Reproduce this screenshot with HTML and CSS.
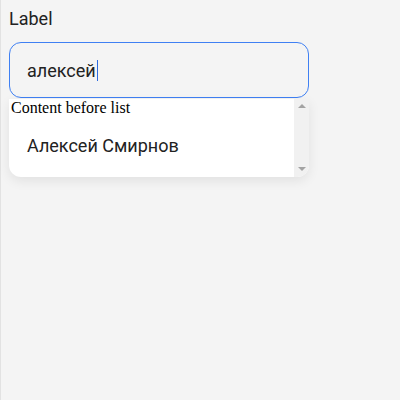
FILE: index.html
```html
<!DOCTYPE html>
<html>
<head>
<meta charset="utf-8">
<link rel="stylesheet" href="styles.css">
</head>
<body>
<div class="page">
  <div class="field">
    <div class="label">Label</div>
    <div class="input"><span class="value">алексей</span><span class="caret"></span></div>
    <div class="dropdown">
      <div class="list">
        <div class="before">Content before list</div>
        <div class="option">Алексей Смирнов</div>
      </div>
      <div class="scrollbar">
        <span class="arrow up"></span>
        <span class="arrow down"></span>
      </div>
    </div>
  </div>
</div>
</body>
</html>
```
FILE: styles.css
```css
html, body {
  margin: 0;
  height: 100%;
  background: #f4f4f4;
}
.page {
  box-sizing: border-box;
  height: 100%;
  border-left: 1px solid #e2e2e2;
  padding: 8px 8px;
}
.field {
  width: 300px;
  font-family: Roboto, "Noto Sans", sans-serif;
  color: #222;
}
.label {
  font-size: 18px;
  line-height: 21px;
  margin-bottom: 13px;
}
.input {
  box-sizing: border-box;
  height: 56px;
  border: 1px solid #3f80f3;
  border-radius: 12px;
  padding: 0 17px;
  display: flex;
  align-items: center;
  font-size: 18px;
}
.caret {
  width: 1px;
  height: 21px;
  background: #2d6be0;
  margin-left: 1px;
}
.dropdown {
  box-sizing: border-box;
  height: 78px;
  margin-top: 1px;
  background: #fff;
  border-radius: 0 0 12px 12px;
  box-shadow: 0 4px 12px rgba(0, 0, 0, 0.08);
  overflow: hidden;
  display: flex;
}
.list {
  flex: 1;
  padding-left: 2px;
}
.before {
  font-family: "Liberation Serif", serif;
  font-size: 16px;
  line-height: 18px;
  color: #000;
}
.option {
  height: 56px;
  display: flex;
  align-items: center;
  padding-left: 16px;
  font-size: 18px;
}
.scrollbar {
  width: 15px;
  background: #f1f1f1;
  display: flex;
  flex-direction: column;
  justify-content: space-between;
  align-items: center;
  padding: 5px 0 6px;
  box-sizing: border-box;
}
.arrow {
  width: 0;
  height: 0;
  border-left: 4px solid transparent;
  border-right: 4px solid transparent;
}
.arrow.up {
  border-bottom: 4px solid #a3a3a3;
}
.arrow.down {
  border-top: 4px solid #a3a3a3;
}
```
